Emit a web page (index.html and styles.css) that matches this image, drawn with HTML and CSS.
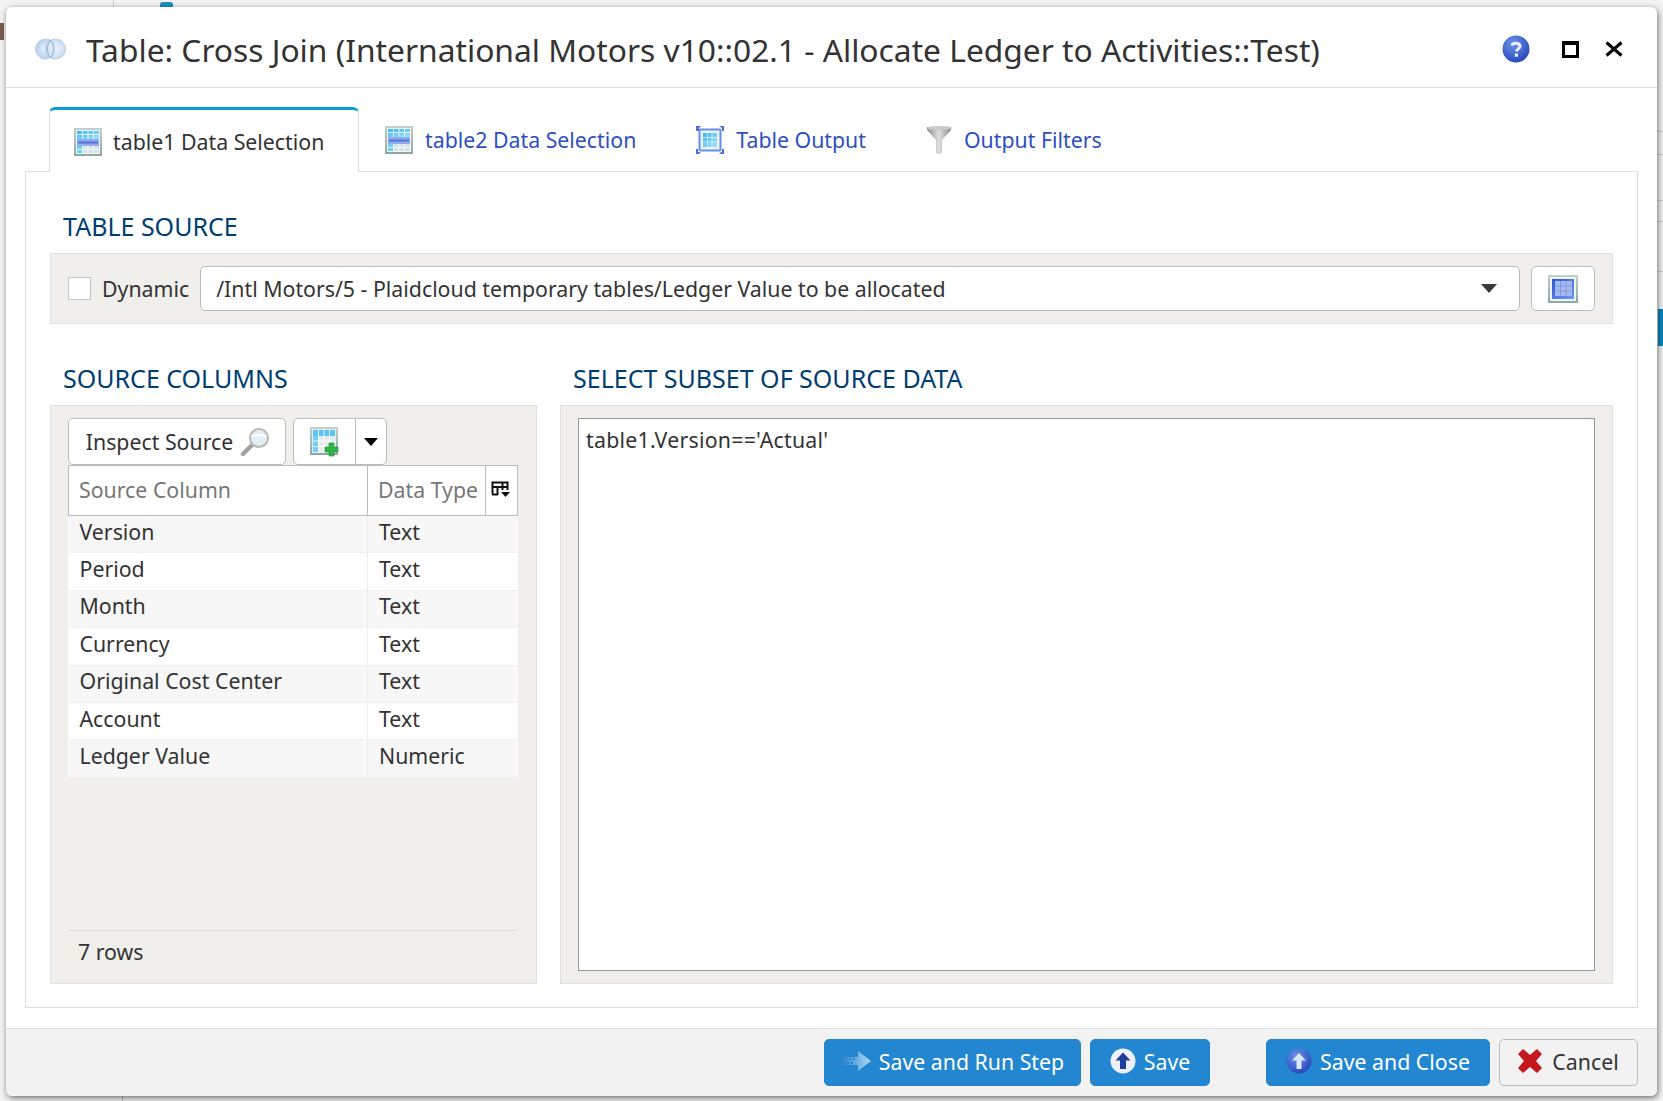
FILE: index.html
```html
<!DOCTYPE html>
<html lang="en">
<head>
	<meta charset="UTF-8">
	<title>Table: Cross Join</title>
	<link rel="stylesheet" href="styles.css">
</head>
<body>
	<svg class="defs" width="0" height="0">
		<defs>
			<linearGradient id="gCyan" x1="0" y1="0" x2="1" y2="1"><stop offset="0" stop-color="#35b8f6"/><stop offset="1" stop-color="#a5e2f5"/></linearGradient>
			<linearGradient id="gBlue" x1="0" y1="0" x2="1" y2="1"><stop offset="0" stop-color="#2a55d8"/><stop offset="1" stop-color="#6f9af0"/></linearGradient>
			<linearGradient id="gSteel" x1="0" y1="0" x2="0" y2="1"><stop offset="0" stop-color="#c5cfcf"/><stop offset="1" stop-color="#8fa5a5"/></linearGradient>
			<linearGradient id="gFunnel" x1="0" y1="0" x2="1" y2="0"><stop offset="0" stop-color="#8d8d8d"/><stop offset=".5" stop-color="#e0e0e0"/><stop offset="1" stop-color="#8a8a8a"/></linearGradient>
			<radialGradient id="gBall" cx=".4" cy=".3" r=".8"><stop offset="0" stop-color="#6c93ea"/><stop offset="1" stop-color="#1f3fb4"/></radialGradient>
			<radialGradient id="gRing" cx=".5" cy=".5" r=".5"><stop offset="0" stop-color="#eaf2fa"/><stop offset="1" stop-color="#b3cce8"/></radialGradient>
			<linearGradient id="gArrow" x1="0" y1="0" x2="1" y2="0"><stop offset="0" stop-color="#2f7fc8"/><stop offset="1" stop-color="#a9dcf7"/></linearGradient>

			<symbol id="iconTable" viewBox="0 0 28 28">
				<rect width="28" height="28" fill="url(#gSteel)"/>
				<rect x="2" y="2" width="24" height="24" fill="#eef5f5"/>
				<rect x="3" y="3" width="22" height="8" fill="url(#gCyan)"/>
				<rect x="3" y="18" width="22" height="7" fill="#d5e4e4"/>
				<rect x="3" y="18" width="5" height="7" fill="#6fd0f5"/>
				<rect x="3" y="11" width="22" height="7" fill="#93abef"/>
				<rect x="4" y="13.500" width="20" height="2" fill="#5575dc"/>
				<path d="M3 6.500h22M3 21.500h22M8.500 3v8M14 3v8M19.500 3v8M8.500 18v7M14 18v7M19.500 18v7" stroke="#fff" stroke-opacity=".75" fill="none"/>
			</symbol>
		</defs>
	</svg>

	<i class="bg-mark bg-mark-top"></i>
	<i class="bg-mark bg-mark-left"></i>
	<i class="bg-mark bg-mark-right"></i>
	<i class="bg-mark bg-line-top"></i>
	<i class="bg-mark bg-line-bottom"></i>
	<i class="bg-mark bg-rule bg-rule-1"></i>
	<i class="bg-mark bg-rule bg-rule-2"></i>
	<i class="bg-mark bg-rule bg-rule-3"></i>
	<i class="bg-mark bg-rule bg-rule-4"></i>
	<i class="bg-mark bg-rule bg-rule-5"></i>

	<div class="dialog">
		<div class="titlebar">
			<svg class="join-icon" width="31" height="22" viewBox="0 0 31 22">
				<circle cx="10.500" cy="11" r="10" fill="url(#gRing)" fill-opacity=".95" stroke="#b5cce6"/>
				<circle cx="20.500" cy="11" r="10" fill="url(#gRing)" fill-opacity=".7" stroke="#b5cce6"/>
				<path d="M15.500 2.500c-4 5-4 12 0 17 4-5 4-12 0-17z" fill="#dbe8f5" stroke="#8fafd6"/>
			</svg>
			<h1 class="title">Table: Cross Join (International Motors v10::02.1 - Allocate Ledger to Activities::Test)</h1>
			<div class="win-actions">
				<svg width="28" height="28" viewBox="0 0 28 28">
					<circle cx="14" cy="14" r="13.500" fill="url(#gBall)"/>
					<path d="M10 10.500c.5-3 7.500-3.500 8 .5 .3 2.500-3.500 3-3.500 5.500" fill="none" stroke="#e8eefc" stroke-width="3"/>
					<rect x="12.800" y="18.500" width="3.200" height="3.200" fill="#e8eefc"/>
				</svg>
				<i class="win-max"></i>
				<svg class="win-close" width="18" height="18" viewBox="0 0 18 18"><path d="M1.500 2.500l15 13M16.500 2.500l-15 13" stroke="#000" stroke-width="3"/></svg>
			</div>
		</div>

		<div class="body">
			<div class="tabs">
				<a class="tab active">
					<svg width="28" height="28"><use href="#iconTable"/></svg>
					table1 Data Selection
				</a>
				<a class="tab tab-next">
					<svg width="28" height="28"><use href="#iconTable"/></svg>
					table2 Data Selection
				</a>
				<a class="tab">
					<svg width="28" height="28" viewBox="0 0 28 28">
						<rect x="3.500" y="3.500" width="21" height="21" rx="1" fill="#e9f3fb" stroke="#6a8ee6" stroke-width="2"/>
						<rect x="7" y="7" width="14" height="14" fill="url(#gCyan)"/>
						<path d="M11.500 7v14M16 7v14M7 11.500h14M7 16h14" stroke="#fff" stroke-opacity=".6"/>
						<path d="M0 5V0h5L3 2v3zM23 0h5v5h-2V2zM0 23h2v3h3l-2 2H0zM28 23v5h-5l2-2h1v-3z" fill="#4a72dc"/>
					</svg>
					Table Output
				</a>
				<a class="tab tab-filter">
					<svg width="26" height="30" viewBox="0 0 26 30">
						<path d="M1 2h24v3L16 15v13l-2 1h-2l-2-1V15L1 5z" fill="url(#gFunnel)"/>
						<ellipse cx="13" cy="3" rx="12" ry="2" fill="#c9c9c9"/>
					</svg>
					Output Filters
				</a>
			</div>

			<div class="tab-pane">
				<h2 class="section-title">TABLE SOURCE</h2>
				<div class="source-bar">
					<label class="dynamic"><span class="checkbox"></span>Dynamic</label>
					<div class="select">
						<span>/Intl Motors/5 - Plaidcloud temporary tables/Ledger Value to be allocated</span>
						<i class="caret"></i>
					</div>
					<button class="btn grid-btn">
						<svg width="30" height="28" viewBox="0 0 30 28">
							<rect width="30" height="28" fill="url(#gSteel)"/>
							<rect x="2" y="2" width="26" height="24" fill="#eef5f5"/>
							<rect x="4" y="4" width="22" height="20" fill="url(#gBlue)"/>
							<rect x="7" y="6" width="17" height="15" fill="#a6b8ee"/>
							<path d="M7 11h17M7 16h17M12.500 6v15M18 6v15" stroke="#8299e2"/>
						</svg>
					</button>
				</div>

				<div class="columns">
					<section class="col-left">
						<h2 class="section-title">SOURCE COLUMNS</h2>
						<div class="panel panel-left">
							<div class="toolbar">
								<button class="btn inspect-btn">
									Inspect Source
									<svg width="30" height="28" viewBox="0 0 30 28">
										<path d="M3 26l9-9" stroke="#a2a2a2" stroke-width="4.500" stroke-linecap="round"/>
										<circle cx="19" cy="10" r="9" fill="#e2eef5" stroke="#bdbdb5" stroke-width="2.200"/>
										<path d="M12 8.500c2-2 10-2 14 0" stroke="#fff" stroke-width="2" fill="none"/>
									</svg>
								</button>
								<div class="split-btn">
									<button class="btn split-main">
										<svg width="30" height="30" viewBox="0 0 30 30">
											<rect width="28" height="28" fill="url(#gSteel)"/>
											<rect x="2" y="2" width="24" height="24" fill="#e4eeee"/>
											<rect x="3" y="3" width="22" height="6" fill="#5cc4f5"/>
											<rect x="3" y="9" width="5" height="16" fill="#6fd0f5"/>
											<path d="M3 14h22M3 19.500h22M8.500 3v22M14 3v22M19.500 3v22" stroke="#fff" stroke-opacity=".8" fill="none"/>
											<path d="M19 16h5v4h4v5h-4v4h-5v-4h-4v-5h4z" fill="#2fb24a" stroke="#1d8a35" stroke-width=".6"/>
										</svg>
									</button>
									<button class="btn split-arrow"><i class="caret caret-black"></i></button>
								</div>
							</div>

							<table class="grid">
								<thead>
									<tr>
										<th class="col-name">Source Column</th>
										<th class="col-type">Data Type</th>
										<th class="col-menu">
											<svg width="20" height="18" viewBox="0 0 20 18">
												<path d="M1.500 13V1.500h15V9M1.500 6h15M6.500 6v8M11.500 2v7" stroke="#111" stroke-width="2" fill="none"/>
												<path d="M1 13.500h6" stroke="#111" stroke-width="2"/>
												<path d="M10 11h9l-4.500 5z" fill="#111"/>
											</svg>
										</th>
									</tr>
								</thead>
								<tbody>
									<tr><td>Version</td><td colspan="2">Text</td></tr>
									<tr><td>Period</td><td colspan="2">Text</td></tr>
									<tr><td>Month</td><td colspan="2">Text</td></tr>
									<tr><td>Currency</td><td colspan="2">Text</td></tr>
									<tr><td>Original Cost Center</td><td colspan="2">Text</td></tr>
									<tr><td>Account</td><td colspan="2">Text</td></tr>
									<tr><td>Ledger Value</td><td colspan="2">Numeric</td></tr>
								</tbody>
							</table>

							<div class="row-count">7 rows</div>
						</div>
					</section>

					<section class="col-right">
						<h2 class="section-title">SELECT SUBSET OF SOURCE DATA</h2>
						<div class="panel panel-right">
							<div class="code-box">table1.Version=='Actual'</div>
						</div>
					</section>
				</div>
			</div>
		</div>

		<div class="footer">
			<button class="btn btn-blue run-btn">
				<svg width="30" height="24" viewBox="0 0 30 24">
					<path d="M17 2l13 10-13 10v-6H0V8h17z" fill="url(#gArrow)"/>
					<path d="M0 10h14M2 14h12" stroke="#2286d0" stroke-dasharray="2 2" stroke-width="2"/>
				</svg>
				Save and Run Step
			</button>
			<button class="btn btn-blue save-btn">
				<svg width="26" height="26" viewBox="0 0 26 26">
					<circle cx="13" cy="13" r="12.500" fill="#eef1fc"/>
					<path d="M13 4.500l7.500 8H16V21h-6v-8.500H5.500z" fill="#1f3f9c"/>
				</svg>
				Save
			</button>
			<button class="btn btn-blue close-btn">
				<svg width="26" height="26" viewBox="0 0 26 26">
					<circle cx="13" cy="13" r="12.500" fill="url(#gBall)"/>
					<path d="M13 5l7 7.500H15.500V21h-5v-8.500H6z" fill="#dbe6f7"/>
				</svg>
				Save and Close
			</button>
			<button class="btn cancel-btn">
				<svg width="24" height="24" viewBox="0 0 24 24">
					<path d="M5 0l7 6 7-6 5 5-6 7 6 7-5 5-7-6-7 6-5-5 6-7-6-7z" fill="#c4181c"/>
				</svg>
				Cancel
			</button>
		</div>
	</div>
</body>
</html>
```

FILE: styles.css
```css
* {
	box-sizing: border-box;
}

html, body {
	height: 100%;
}

body {
	margin: 0;
	padding: 7px 6px 5px 6px;
	height: 1101px;
	overflow: hidden;
	background: #f3f3f3;
	font-family: "Noto Sans", "Open Sans", sans-serif;
	font-size: 21.300px;
	color: #333;
}

.defs {
	position: absolute;
}

/* bits of the page behind the dialog */
.bg-mark {
	position: absolute;
	display: block;
}

.bg-mark-top {
	left: 160px;
	top: 2px;
	width: 13px;
	height: 6px;
	background: #1b8fc4;
	border-radius: 3px 3px 0 0;
}

.bg-mark-left {
	left: 0;
	top: 23px;
	width: 4px;
	height: 17px;
	background: #7d5a50;
}

.bg-mark-right {
	left: 1658px;
	top: 309px;
	width: 5px;
	height: 37px;
	background: #0a85bd;
}

.bg-line-top {
	left: 113px;
	top: 0;
	width: 1px;
	height: 7px;
	background: #ccc;
}

.bg-line-bottom {
	left: 122px;
	top: 1096px;
	width: 1px;
	height: 5px;
	background: #bbb;
}

.bg-rule {
	left: 1658px;
	width: 5px;
	height: 1px;
	background: #ccc;
}

.bg-rule-1 { top: 131px; }
.bg-rule-2 { top: 154px; }
.bg-rule-3 { top: 200px; }
.bg-rule-4 { top: 221px; }
.bg-rule-5 { top: 271px; }

.dialog {
	position: relative;
	display: flex;
	flex-direction: column;
	height: 1089px;
	background: #fff;
	border-radius: 6px;
	box-shadow: 1px 2px 6px rgba(0, 0, 0, .55);
	overflow: hidden;
}

/* title bar */
.titlebar {
	display: flex;
	align-items: center;
	height: 81px;
	padding: 0 34px 0 29px;
	border-bottom: 1px solid #ddd;
}

.join-icon {
	margin-top: 3px;
	flex: none;
}

.title {
	flex: 1;
	margin: 0 0 0 20px;
	padding-top: 4px;
	font-size: 31.750px;
	font-weight: 400;
	white-space: nowrap;
}

.win-actions {
	display: flex;
	align-items: center;
	padding-top: 4px;
}

.win-max {
	display: block;
	width: 17px;
	height: 17px;
	margin-left: 32px;
	border: 3px solid #000;
	border-top-width: 4px;
}

.win-close {
	margin-left: 26px;
}

/* tabs */
.body {
	flex: 1;
	padding: 19px 19px 20px 19px;
}

.tabs {
	display: flex;
	height: 64px;
	padding-left: 24px;
}

.tab {
	display: flex;
	align-items: center;
	gap: 12px;
	height: 64px;
	padding: 1px 29px 0 31px;
	color: #2d4fc0;
	white-space: nowrap;
}

.tab.active {
	gap: 11px;
	width: 310px;
	height: 65px;
	padding: 1px 0 0 24px;
	color: #333;
	background: #fff;
	border: 1px solid #ddd;
	border-top: 3px solid #0a9bdc;
	border-bottom: 0;
	border-radius: 6px 6px 0 0;
	position: relative;
	z-index: 1;
}

.tab-next {
	padding-left: 26px;
}

.tab-pane {
	height: 837px;
	padding: 36px 24px 23px 24px;
	border: 1px solid #ddd;
}

.section-title {
	margin: 0;
	padding-left: 13px;
	height: 45px;
	font-size: 25px;
	font-weight: 400;
	line-height: 36px;
	color: #003e72;
}

/* table source row */
.source-bar {
	display: flex;
	align-items: center;
	height: 71px;
	padding: 0 17px;
	background: #f0efec;
	border: 1px solid #e0e0e0;
}

.dynamic {
	display: flex;
	align-items: center;
	gap: 11px;
	margin-right: 11px;
	white-space: nowrap;
}

.checkbox {
	display: block;
	width: 23px;
	height: 23px;
	background: #fff;
	border: 1px solid #c4c4c4;
}

.select {
	flex: 1;
	display: flex;
	align-items: center;
	justify-content: space-between;
	height: 45px;
	padding: 0 22px 0 15px;
	background: #fff;
	border: 1px solid #bbb;
	border-radius: 5px;
}

.caret {
	display: block;
	width: 0;
	height: 0;
	border-left: 8px solid transparent;
	border-right: 8px solid transparent;
	border-top: 9px solid #3a3a3a;
}

.caret-black {
	border-left-width: 7px;
	border-right-width: 7px;
	border-top: 8px solid #000;
}

.btn {
	display: flex;
	align-items: center;
	justify-content: center;
	height: 47px;
	padding: 0;
	font: inherit;
	color: inherit;
	background: #fff;
	border: 1px solid #bbb;
	border-radius: 5px;
	white-space: nowrap;
}

.grid-btn {
	width: 64px;
	height: 45px;
	margin-left: 11px;
}

/* the two panels */
.columns {
	display: flex;
	gap: 23px;
	margin-top: 36px;
}

.col-left {
	width: 487px;
}

.col-right {
	flex: 1;
}

.panel {
	height: 579px;
	background: #f0efec;
	border: 1px solid #e0e0e0;
}

.panel-left {
	display: flex;
	flex-direction: column;
	padding: 12px 18px 0 17px;
}

.toolbar {
	display: flex;
	gap: 7px;
	height: 47px;
}

.inspect-btn {
	width: 218px;
	gap: 7px;
	padding-left: 2px;
}

.split-btn {
	display: flex;
}

.split-main {
	width: 63px;
	border-radius: 5px 0 0 5px;
}

.split-arrow {
	width: 32px;
	margin-left: -1px;
	border-radius: 0 5px 5px 0;
}

.grid {
	width: 450px;
	table-layout: fixed;
	border-collapse: collapse;
	background: #fff;
}

.grid th {
	height: 50px;
	padding: 0 0 2px 10px;
	font-weight: 400;
	text-align: left;
	color: #777;
	background: #fff;
	border: 1px solid #bbb;
}

.col-name {
	width: 299px;
}

.col-type {
	width: 118px;
}

.grid .col-menu {
	padding: 0 0 0 5px;
}

.grid td {
	height: 37.400px;
	padding: 0 0 6px 11px;
	line-height: 1;
	border-bottom: 1px solid #f0f0f0;
	border-right: 1px solid #eee;
}

.grid tr td:last-child {
	border-right: 0;
}

.grid tbody tr:nth-child(odd) {
	background: #f7f7f7;
}

.row-count {
	margin-top: auto;
	height: 53px;
	padding: 6px 0 0 10px;
	border-top: 1px solid #ddd;
}

.panel-right {
	padding: 12px 17px;
}

.code-box {
	height: 553px;
	padding: 6px 7px;
	letter-spacing: .25px;
	background: #fff;
	border: 1px solid #999;
}

/* footer buttons */
.footer {
	display: flex;
	align-items: center;
	justify-content: flex-end;
	height: 68px;
	padding: 0 19px 1px 0;
	background: #f2f2f2;
	border-top: 1px solid #ddd;
}

.btn-blue {
	gap: 8px;
	padding-bottom: 2px;
	color: #fff;
	background: #2286d0;
	border-color: #2286d0;
}

.run-btn {
	width: 257px;
}

.save-btn {
	width: 120px;
	margin-left: 9px;
}

.close-btn {
	width: 224px;
	margin-left: 56px;
}

.cancel-btn {
	width: 139px;
	margin-left: 9px;
	padding-bottom: 2px;
	gap: 10px;
	background: #f2f2f2;
}
```
